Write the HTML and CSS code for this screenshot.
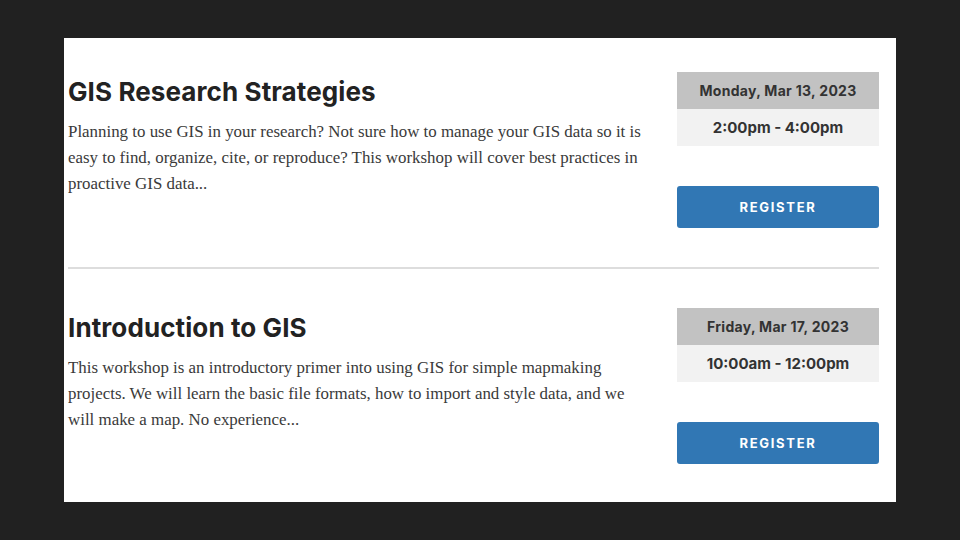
FILE: index.html
```html
<!DOCTYPE html>
<html>
<head>
<meta charset="utf-8">
<link rel="stylesheet" href="styles.css">
</head>
<body>
<div class="panel">
  <section class="event first">
    <div class="info">
      <h2 class="title">GIS Research Strategies</h2>
      <p class="desc">Planning to use GIS in your research? Not sure how to manage your GIS data so it is easy to find, organize, cite, or reproduce? This workshop will cover best practices in proactive GIS data...</p>
    </div>
    <div class="side">
      <div class="date">Monday, Mar 13, 2023</div>
      <div class="time">2:00pm - 4:00pm</div>
      <a class="register" href="#">REGISTER</a>
    </div>
  </section>
  <hr class="divider">
  <section class="event second">
    <div class="info">
      <h2 class="title">Introduction to GIS</h2>
      <p class="desc">This workshop is an introductory primer into using GIS for simple mapmaking projects. We will learn the basic file formats, how to import and style data, and we will make a map. No experience...</p>
    </div>
    <div class="side">
      <div class="date">Friday, Mar 17, 2023</div>
      <div class="time">10:00am - 12:00pm</div>
      <a class="register" href="#">REGISTER</a>
    </div>
  </section>
</div>
</body>
</html>
```
FILE: styles.css
```css
html, body {
  margin: 0;
  padding: 0;
  background: #212121;
}
body {
  padding: 38px 64px;
}
.panel {
  background: #ffffff;
  width: 832px;
  height: 464px;
  box-sizing: border-box;
  padding: 34px 17px 0 4px;
}
.event {
  display: flex;
  gap: 30px;
}
.event.first {
  padding-bottom: 39px;
}
.event.second {
  padding-top: 39px;
}
.info {
  flex: 1;
}
.title {
  margin: 0;
  padding-top: 5px;
  font-family: "Inter", "Noto Sans", sans-serif;
  font-weight: 700;
  font-size: 26px;
  line-height: 30px;
  color: #222222;
  letter-spacing: 0.1px;
}
.desc {
  margin: 12px 0 0;
  font-family: "Liberation Serif", "DejaVu Serif", serif;
  font-size: 16.9px;
  line-height: 26px;
  color: #3a3a3a;
}
.side {
  width: 202px;
  flex: none;
  display: flex;
  flex-direction: column;
}
.date, .time {
  height: 37px;
  display: flex;
  align-items: center;
  justify-content: center;
  font-family: "Inter", "Noto Sans", sans-serif;
  font-weight: 700;
  color: #333333;
}
.date {
  background: #c2c2c2;
  font-size: 14px;
  letter-spacing: 0.3px;
}
.time {
  background: #f2f2f2;
  font-size: 15px;
}
.register {
  margin-top: 40px;
  height: 42px;
  border-radius: 3px;
  background: #3177b4;
  color: #ffffff;
  text-decoration: none;
  display: flex;
  align-items: center;
  justify-content: center;
  font-family: "Inter", "Noto Sans", sans-serif;
  font-weight: 700;
  font-size: 13px;
  letter-spacing: 1.7px;
}
.divider {
  margin: 0;
  border: none;
  height: 2px;
  background: #dddddd;
}
```
